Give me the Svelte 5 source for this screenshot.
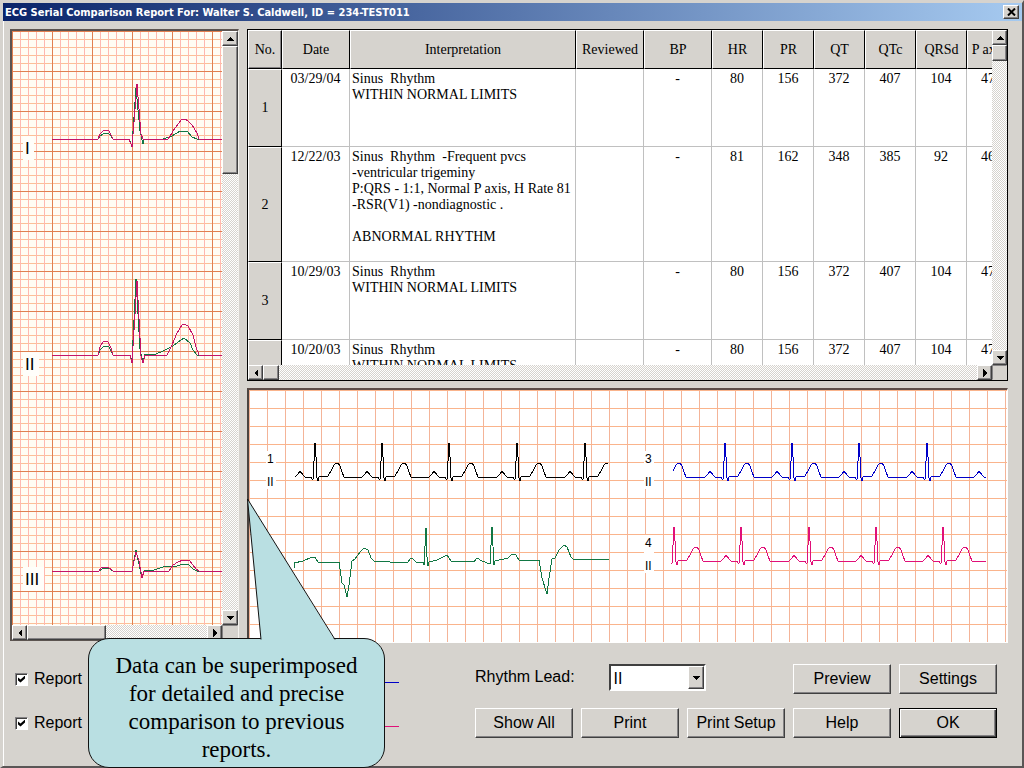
<script>
  const columns = [
    { label: 'Date', width: 68 },
    { label: 'Interpretation', width: 226 },
    { label: 'Reviewed', width: 68 },
    { label: 'BP', width: 68 },
    { label: 'HR', width: 51 },
    { label: 'PR', width: 51 },
    { label: 'QT', width: 51 },
    { label: 'QTc', width: 51 },
    { label: 'QRSd', width: 51 },
    { label: 'P axis', width: 43 },
  ];

  const normal = 'Sinus  Rhythm\nWITHIN NORMAL LIMITS\n\n';
  const reports = [
    { date: '03/29/04', text: normal, values: ['', '-', 80, 156, 372, 407, 104, 47] },
    {
      date: '12/22/03',
      text: 'Sinus  Rhythm  -Frequent pvcs\n-ventricular trigeminy\nP:QRS - 1:1, Normal P axis, H Rate 81\n-RSR(V1) -nondiagnostic .\n\nABNORMAL RHYTHM',
      tall: true,
      values: ['', '-', 81, 162, 348, 385, 92, 46],
    },
    { date: '10/29/03', text: normal, values: ['', '-', 80, 156, 372, 407, 104, 47] },
    { date: '10/20/03', text: normal, values: ['', '-', 80, 156, 372, 407, 104, 47] },
  ];

  // superimposed leads: green = previous, magenta = current
  const leads = [
    {
      name: 'I', y: 123,
      green: '40,108 86,108 88,105 91,103 93,102 96,102 99,105 101,108 117,108 120,115 124,57 128,100 131,113 132,108 151,108 160,105 168,100 175,100 180,106 185,108 210,108',
      magenta: '40,108 86,108 88,103 91,100 93,99 97,100 100,106 101,108 117,108 120,116 125,53 129,103 131,108 156,108 160,102 163,97 170,88 173,88 176,90 180,94 185,102 187,108 210,108',
    },
    {
      name: 'II', y: 339,
      green: '40,324 86,324 88,319 91,316 94,315 97,316 101,324 118,324 120,330 124,248 128,318 131,332 133,323 141,324 149,321 155,318 161,315 166,311 172,307 178,312 181,319 185,324 210,324',
      magenta: '40,324 86,324 88,316 91,311 93,310 96,311 99,317 101,324 118,324 120,332 125,250 129,325 131,332 133,324 155,324 160,314 165,302 170,294 172,293 176,295 181,304 184,316 187,324 210,324',
    },
    {
      name: 'III', y: 554,
      green: '40,540 87,540 90,538 94,537 98,538 101,540 120,540 124,519 128,538 130,547 132,540 142,539 151,536 165,535 171,533 177,534 181,538 185,540 210,541',
      magenta: '40,540 87,540 89,537 92,536 96,536 101,540 120,540 124,521 127,530 130,547 132,540 157,540 161,534 166,531 171,529 177,529 181,534 184,538 187,540 210,540',
    },
  ];

  // one normal beat, as offsets from the R peak
  const beat = [
    [-20, 0], [-17, -3], [-15, -6], [-12, -2], [-10, 0], [-4, 0], [-3, 2], [-2, 2],
    [0, -34], [1, -20], [2, 1], [3, 4], [4, 0], [13, -1], [16, -6], [19, -12],
    [21, -14], [23, -14], [25, -11], [27, -5], [29, 0],
  ];

  function rhythm(peaks, base, from, to) {
    const pts = peaks
      .flatMap((r) => beat.map(([x, y]) => [r + x, base + y]))
      .filter(([x]) => x >= from && x <= to);
    if (pts[pts.length - 1][1] === base) pts.push([to, base]);
    return pts.join(' ');
  }

  const strips = [
    { color: '#000', points: rhythm([66, 133, 200, 268, 336], 87, 45, 360) },
    {
      color: '#117744',
      points: '45,178 45,173 54,171 63,167 66,167 69,172 90,172 93,193 95,195 98,207 100,195 103,171 106,169 111,162 115,158 119,160 122,168 125,171 141,172 159,172 162,168 164,169 167,172 174,172 175,175 177,138 178,167 179,176 180,172 188,170 198,165 202,171 225,172 228,168 233,171 241,174 243,137 245,175 246,171 259,168 263,164 267,165 270,170 290,170 293,188 298,204 300,188 303,169 306,168 310,160 315,155 318,157 322,167 324,169 360,170',
    },
    { color: '#0000c8', points: rhythm([408, 476, 543, 610, 678, 745], 87, 423, 737) },
    { color: '#e01078', points: rhythm([425, 492, 560, 627, 694], 171, 422, 737) },
  ];
  const stripLabels = [
    { n: 1, x: 18, y: 73 },
    { n: 3, x: 396, y: 73 },
    { n: 4, x: 396, y: 157 },
  ];

  let lead = $state('II');
  let shown = $state([true, true]);
  const legendColors = ['#0000c8', '#e01078'];
</script>

{#snippet arrow(dir)}
  <svg class="arrow" width="8" height="8" viewBox="0 0 8 8" aria-hidden="true">
    {#if dir === 'up'}<path d="M4 2L8 6H0z" />
    {:else if dir === 'down'}<path d="M0 2H8L4 6z" />
    {:else if dir === 'left'}<path d="M2 4L6 0V8z" />
    {:else}<path d="M6 4L2 0V8z" />{/if}
  </svg>
{/snippet}

{#snippet scrollbar(vertical, size)}
  <div class="bar" class:vertical>
    <button class="raised step" aria-label={vertical ? 'Scroll up' : 'Scroll left'}>{@render arrow(vertical ? 'up' : 'left')}</button>
    <div class="raised thumb {size}"></div>
    <div class="track"></div>
    <button class="raised step" aria-label={vertical ? 'Scroll down' : 'Scroll right'}>{@render arrow(vertical ? 'down' : 'right')}</button>
  </div>
{/snippet}

<div class="window">
  <header class="title">
    <h1>ECG Serial Comparison Report For: Walter S. Caldwell, ID = 234-TEST011</h1>
    <button class="raised close" aria-label="Close">
      <svg width="9" height="8" viewBox="0 0 9 8"><path d="M1 0.5L8 7.5M8 0.5L1 7.5" stroke="#000" stroke-width="2" /></svg>
    </button>
  </header>

  <main>
    <section class="leads">
      <svg class="paper">
        {#each leads as l}
          <rect x="11" y={l.y - 18} width={l.name.length * 5 + 6} height="24" fill="#fffefa" />
          <text x="13" y={l.y} font-size="17">{l.name}</text>
          <polyline points={l.green} stroke="#117744" />
          <polyline points={l.magenta} stroke="#c41468" />
        {/each}
      </svg>
      {@render scrollbar(true, 'long')}
      {@render scrollbar(false, 'mid')}
      <div class="corner"></div>
    </section>

    <div class="right">
      <section class="reports">
        <div class="viewport">
          <table>
            <colgroup>
              <col style="width: 34px" />
              {#each columns as c}<col style="width: {c.width}px" />{/each}
            </colgroup>
            <thead>
              <tr>
                <th class="first">No.</th>
                {#each columns as c}<th>{c.label}</th>{/each}
              </tr>
            </thead>
            <tbody>
              {#each reports as r, i}
                <tr class:tall={r.tall}>
                  <th scope="row">{i + 1}</th>
                  <td>{r.date}</td>
                  <td class="text">{r.text}</td>
                  {#each r.values as v}<td>{v}</td>{/each}
                </tr>
              {/each}
            </tbody>
          </table>
        </div>
        {@render scrollbar(true, 'short')}
        {@render scrollbar(false, 'short')}
        <div class="corner"></div>
      </section>

      <section class="strips">
        <svg>
          {#each stripLabels as s}
            <rect x={s.x - 1} y={s.y - 12} width="10" height="38" fill="#fff" />
            <text x={s.x} y={s.y} font-size="12">{s.n}</text>
            <text x={s.x} y={s.y + 23} font-size="12">II</text>
          {/each}
          {#each strips as s}
            <polyline points={s.points} stroke={s.color} />
          {/each}
        </svg>
      </section>
    </div>
  </main>

  <footer>
    <div class="legend">
      {#each shown as _, i}
        <div class="legend__row">
          <label><input type="checkbox" bind:checked={shown[i]} />Report</label>
          <span class="legend__line" style="background: {legendColors[i]}"></span>
        </div>
      {/each}
      <div class="callout">
        <svg class="tail" width="92" height="143" viewBox="0 0 92 143" aria-hidden="true">
          <path d="M14 142.500L0.500 1L88 142.500" fill="#b9dfe2" />
          <path d="M14 141.500L0.500 1L88 141.500" fill="none" stroke="#111" />
        </svg>
        Data can be superimposed for detailed and precise comparison to previous reports.
      </div>
    </div>

    <div class="controls">
      <div class="rhythm">
        <label for="lead">Rhythm Lead:</label>
        <div class="select">
          <select id="lead" bind:value={lead}>
            {#each ['I', 'II', 'III'] as name}<option>{name}</option>{/each}
          </select>
          <span class="raised drop">{@render arrow('down')}</span>
        </div>
      </div>
      <button class="raised btn">Preview</button>
      <button class="raised btn">Settings</button>
      <button class="raised btn">Show All</button>
      <button class="raised btn">Print</button>
      <button class="raised btn">Print Setup</button>
      <button class="raised btn">Help</button>
      <button class="raised btn default">OK</button>
    </div>
  </footer>
</div>

<style>
  :global(body) { margin: 0; }
  * { box-sizing: border-box; }
  .window {
    --face: #d6d3ce;
    --dark: #404040;
    --shade: #848284;
    display: flex; flex-direction: column; height: 100vh;
    background: var(--face); color: #000;
    border: 3px solid var(--face);
    border-right-color: #5a5656; border-bottom-color: #5a5656;
    border-right-width: 2px; border-bottom-width: 2px;
    box-shadow: inset 1px 1px #fff;
    font-family: "Liberation Sans", Arial, sans-serif; font-size: 16px;
  }
  button, select { font: inherit; color: inherit; padding: 0; margin: 0; border-radius: 0; }
  .raised {
    background: var(--face);
    border: 1px solid; border-color: #fff var(--dark) var(--dark) #fff;
    box-shadow: inset -1px -1px var(--shade);
  }

  .title {
    display: flex; align-items: center; justify-content: space-between;
    flex: none; height: 18px; padding: 0 3px 0 2px;
    background: linear-gradient(to right, #0a246a, #a6caf0);
  }
  h1 {
    margin: 0; color: #fff; white-space: nowrap;
    font: bold 11px "DejaVu Sans Condensed", "Noto Sans", sans-serif;
  }
  .close { display: flex; align-items: center; justify-content: center; width: 16px; height: 14px; }

  main { display: flex; gap: 8px; flex: 1; min-height: 0; padding: 8px 14px 0 7px; }

  .leads, .reports { display: grid; }
  .leads {
    grid-template: minmax(0, 1fr) 15px / 210px 16px;
    flex: none; margin-bottom: 2px;
    border: 2px solid; border-color: #5c5450 #f4f2ee #5c5450 #5c5450;
    border-right-width: 1px; border-bottom-width: 1px;
  }
  svg text { fill: #000; }
  polyline { fill: none; stroke-width: 1; shape-rendering: crispEdges; }
  .paper {
    width: 100%; height: 100%;
    background:
      linear-gradient(to right, #e08050 1px, transparent 1px) 0 0 / 40px 40px,
      linear-gradient(#e08050 1px, transparent 1px) 0 0 / 40px 40px,
      linear-gradient(to right, #ffb8b0 1px, transparent 1px) 0 0 / 8px 8px,
      linear-gradient(#fcc098 1px, transparent 1px) 0 0 / 8px 8px,
      #fffdf4;
  }

  .bar { display: flex; min-width: 0; min-height: 0; }
  .bar.vertical { flex-direction: column; }
  .step { display: flex; align-items: center; justify-content: center; flex: 0 0 15px; }
  .arrow { flex: none; shape-rendering: crispEdges; }
  .thumb { flex: none; }
  .thumb.long { flex-basis: 128px; }
  .thumb.mid { flex-basis: 79px; }
  .thumb.short { flex-basis: 16px; }
  .track { flex: 1; background: repeating-conic-gradient(#d6d3ce 0 25%, #fff 0 50%) 0 0 / 2px 2px; }
  .corner { background: var(--face); border: 1px solid; border-color: var(--shade) transparent transparent var(--shade); }

  .right { display: flex; flex-direction: column; gap: 7px; flex: 1; min-width: 0; }
  .reports {
    grid-template: minmax(0, 1fr) 15px / minmax(0, 1fr) 15px;
    flex: 1 1 352px; min-height: 0;
    border: 1px solid #000; background: #fff;
  }
  .viewport { overflow: hidden; }
  table {
    width: 762px; table-layout: fixed; border-collapse: separate; border-spacing: 0;
    font: 14px/16px "Liberation Serif", "Times New Roman", serif;
  }
  th {
    padding: 0; font-weight: normal; background: var(--face);
    border: 1px solid; border-color: #fff #000 #000 #fff;
    white-space: nowrap;
  }
  thead th { height: 39px; }
  th.first { box-shadow: inset -1px -1px var(--shade); }
  td {
    padding: 2px 0 0; text-align: center; vertical-align: top;
    border-right: 1px solid #c0c0c0; border-bottom: 1px solid #c0c0c0;
  }
  td.text { padding-left: 2px; text-align: left; white-space: pre; }
  tbody tr { height: 78px; }
  tbody tr.tall { height: 115px; }

  .strips {
    display: flex; flex: 1 1 255px; min-height: 0;
    border: 2px solid; border-color: #5c4c48 #fff #fff #4c4440;
    border-right-width: 1px; border-bottom-width: 1px;
    background: #fff;
  }
  .strips svg {
    flex: 1; min-width: 0; height: 100%;
    background:
      linear-gradient(#fab48c 1px, transparent 1px) 0 0 / 18px 18px,
      linear-gradient(to right, #f4b498 1px, transparent 1px) 0 0 / 18px 18px,
      #fff;
  }

  footer {
    display: flex; justify-content: space-between; flex: none;
    padding: 21px 25px 28px 12px;
  }
  .legend { position: relative; display: flex; flex-direction: column; gap: 14px; width: 384px; }
  .legend__row { display: flex; align-items: center; justify-content: space-between; height: 30px; }
  .legend label { display: flex; align-items: center; gap: 6px; }
  .legend__line { width: 60px; height: 1px; margin-top: 6px; }
  input[type="checkbox"] {
    appearance: none; display: grid; place-items: center;
    width: 13px; height: 13px; margin: 0; background: #fff;
    border: 1px solid; border-color: var(--shade) #fff #fff var(--shade);
    box-shadow: inset 1px 1px var(--dark);
  }
  input[type="checkbox"]:checked::before {
    content: ""; width: 7px; height: 7px; background: #000;
    clip-path: polygon(0 28%, 36% 58%, 100% 0, 100% 42%, 36% 100%, 0 70%);
  }

  .callout {
    position: absolute; left: 73px; bottom: -30px; width: 297px;
    padding: 13px 20px 3px;
    background: #b9dfe2; border: 1px solid #111; border-radius: 21px;
    font: 23px/28px "Liberation Serif", "Times New Roman", serif;
    text-align: center;
  }
  .tail { position: absolute; left: 158px; bottom: 100%; margin-bottom: -2px; }

  .controls {
    display: grid; grid-template-columns: repeat(5, 98px); gap: 14px 8px;
    grid-auto-rows: 30px;
  }
  .rhythm { grid-column: span 3; display: flex; gap: 34px; line-height: 26px; }
  .select { position: relative; width: 97px; height: 27px; }
  select {
    appearance: none; width: 100%; height: 100%; padding-left: 3px;
    background: #fff; outline: none;
    border: 2px solid; border-color: var(--dark) #fff #fff var(--dark);
  }
  .drop {
    position: absolute; top: 2px; right: 2px; bottom: 2px; width: 16px;
    display: flex; align-items: center; justify-content: center; pointer-events: none;
  }
  .btn { white-space: nowrap; }
  .btn.default { border-color: #000; box-shadow: inset 1px 1px #fff, inset -1px -1px var(--dark), inset -2px -2px var(--shade); }
</style>
